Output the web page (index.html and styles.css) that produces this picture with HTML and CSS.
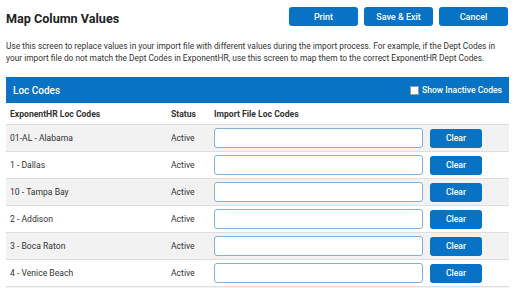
FILE: index.html
```html
<!DOCTYPE html>
<html>
<head>
<meta charset="utf-8">
<link rel="stylesheet" href="styles.css">
</head>
<body>
<div class="page">
  <div class="topbar">
    <h1 class="title">Map Column Values</h1>
    <div class="actions">
      <button class="btn btn-top">Print</button>
      <button class="btn btn-top">Save &amp; Exit</button>
      <button class="btn btn-top">Cancel</button>
    </div>
  </div>
  <p class="desc">Use this screen to replace values in your import file with different values during the import process. For example, if the Dept Codes in your import file do not match the Dept Codes in ExponentHR, use this screen to map them to the correct ExponentHR Dept Codes.</p>
  <div class="panel">
    <div class="panel-head">
      <span class="panel-title">Loc Codes</span>
      <label class="inactive"><span class="box"></span>Show Inactive Codes</label>
    </div>
    <div class="row head">
      <div class="c1">ExponentHR Loc Codes</div>
      <div class="c2">Status</div>
      <div class="c3">Import File Loc Codes</div>
    </div>
    <div class="row alt">
      <div class="c1">01-AL - Alabama</div><div class="c2">Active</div>
      <div class="c3"><span class="field"></span><button class="btn btn-clear">Clear</button></div>
    </div>
    <div class="row">
      <div class="c1">1 - Dallas</div><div class="c2">Active</div>
      <div class="c3"><span class="field"></span><button class="btn btn-clear">Clear</button></div>
    </div>
    <div class="row alt">
      <div class="c1">10 - Tampa Bay</div><div class="c2">Active</div>
      <div class="c3"><span class="field"></span><button class="btn btn-clear">Clear</button></div>
    </div>
    <div class="row">
      <div class="c1">2 - Addison</div><div class="c2">Active</div>
      <div class="c3"><span class="field"></span><button class="btn btn-clear">Clear</button></div>
    </div>
    <div class="row alt">
      <div class="c1">3 - Boca Raton</div><div class="c2">Active</div>
      <div class="c3"><span class="field"></span><button class="btn btn-clear">Clear</button></div>
    </div>
    <div class="row">
      <div class="c1">4 - Venice Beach</div><div class="c2">Active</div>
      <div class="c3"><span class="field"></span><button class="btn btn-clear">Clear</button></div>
    </div>
    <div class="row alt"></div>
  </div>
</div>
</body>
</html>
```
FILE: styles.css
```css
html, body {
  margin: 0;
  padding: 0;
  background: #fff;
  font-family: Roboto, "Liberation Sans", sans-serif;
  color: #333;
  overflow: hidden;
}
.page {
  padding: 7px 5px 0 6px;
}
.topbar {
  display: flex;
  justify-content: space-between;
  align-items: flex-start;
  height: 19px;
}
.title {
  margin: 4px 0 0 0;
  font-size: 12.6px;
  font-weight: 700;
  line-height: 16px;
  color: #222;
}
.actions {
  display: flex;
  gap: 6px;
  margin-right: 1px;
}
.btn {
  border: none;
  background: #0873c4;
  color: #fff;
  font-family: Roboto, "Liberation Sans", sans-serif;
  font-weight: 500;
  border-radius: 3px;
  padding: 0;
  cursor: pointer;
}
.btn-top {
  width: 69px;
  height: 19px;
  font-size: 9px;
}
.desc {
  margin: 14px 0 0 0;
  font-size: 8.35px;
  line-height: 12px;
  color: #333;
}
.panel {
  margin-top: 13px;
}
.panel-head {
  height: 26px;
  background: #0873c4;
  display: flex;
  align-items: center;
  justify-content: space-between;
  padding: 0 7px 0 7px;
  color: #fff;
}
.panel-title {
  font-size: 10px;
  font-weight: 500;
}
.inactive {
  display: flex;
  align-items: center;
  gap: 3px;
  font-size: 8.6px;
  font-weight: 500;
}
.box {
  width: 7px;
  height: 7px;
  background: #fff;
  border: 1px solid #999;
}
.row {
  display: grid;
  grid-template-columns: 165px 43px 1fr;
  align-items: center;
  height: 26px;
  border-bottom: 1px solid #dedede;
  font-size: 8.6px;
}
.row.alt {
  background: #f2f2f2;
}
.row.head {
  height: 21px;
  font-weight: 700;
  background: #fff;
}
.c1 {
  padding-left: 4px;
}
.c3 {
  display: flex;
  align-items: center;
  gap: 7px;
}
.field {
  display: block;
  box-sizing: border-box;
  width: 209px;
  height: 20px;
  border: 1.5px solid #7eb1dc;
  border-radius: 3px;
  background: #fff;
}
.btn-clear {
  width: 52px;
  height: 19px;
  font-size: 8.6px;
}
```
